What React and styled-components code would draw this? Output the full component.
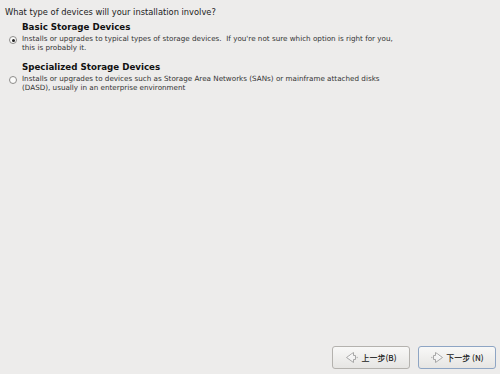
import styled, { createGlobalStyle } from 'styled-components';

const Global = createGlobalStyle`
  html, body {
    margin: 0;
    padding: 0;
    background: #edeceb;
  }
  body {
    font-family: "DejaVu Sans", "Noto Sans CJK SC", sans-serif;
    color: #2a2a2a;
  }
`;

const Page = styled.div`
  width: 500px;
  height: 374px;
  display: flex;
  flex-direction: column;
  box-sizing: border-box;
  padding: 5px 4px 5px 5px;
`;

const Question = styled.div`
  font-size: 8.3px;
  line-height: 14px;
  color: #222;
`;

const Options = styled.div`
  display: flex;
  flex-direction: column;
  gap: 9px;
  margin-top: 2px;
`;

const Option = styled.label`
  display: grid;
  grid-template-columns: 17px 1fr;
`;

const Radio = styled.span`
  grid-column: 1;
  grid-row: 2;
  align-self: start;
  margin: 2px 0 0 4px;
  width: 6px;
  height: 6px;
  border-radius: 50%;
  border: 1px solid #8d8c8a;
  background: #fbfbfa;
  display: flex;
  align-items: center;
  justify-content: center;

  &::after {
    content: '';
    width: 3px;
    height: 3px;
    border-radius: 50%;
    background: ${(p) => (p.checked ? '#222' : 'transparent')};
  }
`;

const Title = styled.div`
  grid-column: 2;
  grid-row: 1;
  font-weight: bold;
  font-size: 8.7px;
  line-height: 13px;
  color: #111;
`;

const Desc = styled.div`
  grid-column: 2;
  grid-row: 2;
  font-size: 7.2px;
  line-height: 9px;
  color: #333;
`;

const Spacer = styled.div`
  flex: 1;
`;

const Footer = styled.div`
  display: flex;
  justify-content: flex-end;
  gap: 8px;
`;

const Button = styled.button`
  width: 78px;
  height: 23px;
  box-sizing: border-box;
  border-radius: 3px;
  border: 1px solid ${(p) => (p.focused ? '#8ea5c4' : '#b4b2ae')};
  background: linear-gradient(#f8f8f7, #e6e5e3);
  display: flex;
  align-items: center;
  justify-content: center;
  gap: 2px;
  padding: 0;
  font-family: "Noto Sans CJK SC", "DejaVu Sans", sans-serif;
  font-size: 8px;
  font-weight: 500;
  color: #222;
`;

const ArrowIcon = ({ dir }) => (
  <svg width="14" height="13" viewBox="0 0 14 13">
    <g transform={dir === 'left' ? 'translate(14,0) scale(-1,1)' : undefined}>
      <path
        d="M5.5 1.5 L12.5 6.5 L5.5 11.5 L5.5 8.5 L3.5 8.5 L3.5 4.5 L5.5 4.5 Z"
        fill="#f3f3f3"
        stroke="#a7a7a7"
        strokeWidth="1"
        strokeLinejoin="round"
      />
      <path d="M6.5 3.2 L10.8 6.5" fill="none" stroke="#ffffff" strokeWidth="0.7" />
      <circle cx="1.8" cy="6.5" r="0.8" fill="#b9b9b9" />
    </g>
  </svg>
);

export default function App() {
  return (
    <>
      <Global />
      <Page>
        <Question>What type of devices will your installation involve?</Question>
        <Options>
          <Option>
            <Title>Basic Storage Devices</Title>
            <Radio checked />
            <Desc>
              Installs or upgrades to typical types of storage devices.&nbsp; If you're not sure which option is right for you,
              <br />
              this is probably it.
            </Desc>
          </Option>
          <Option>
            <Title>Specialized Storage Devices</Title>
            <Radio />
            <Desc>
              Installs or upgrades to devices such as Storage Area Networks (SANs) or mainframe attached disks
              <br />
              (DASD), usually in an enterprise environment
            </Desc>
          </Option>
        </Options>
        <Spacer />
        <Footer>
          <Button>
            <ArrowIcon dir="left" />
            上一步(B)
          </Button>
          <Button focused>
            <ArrowIcon dir="right" />
            下一步 (N)
          </Button>
        </Footer>
      </Page>
    </>
  );
}
